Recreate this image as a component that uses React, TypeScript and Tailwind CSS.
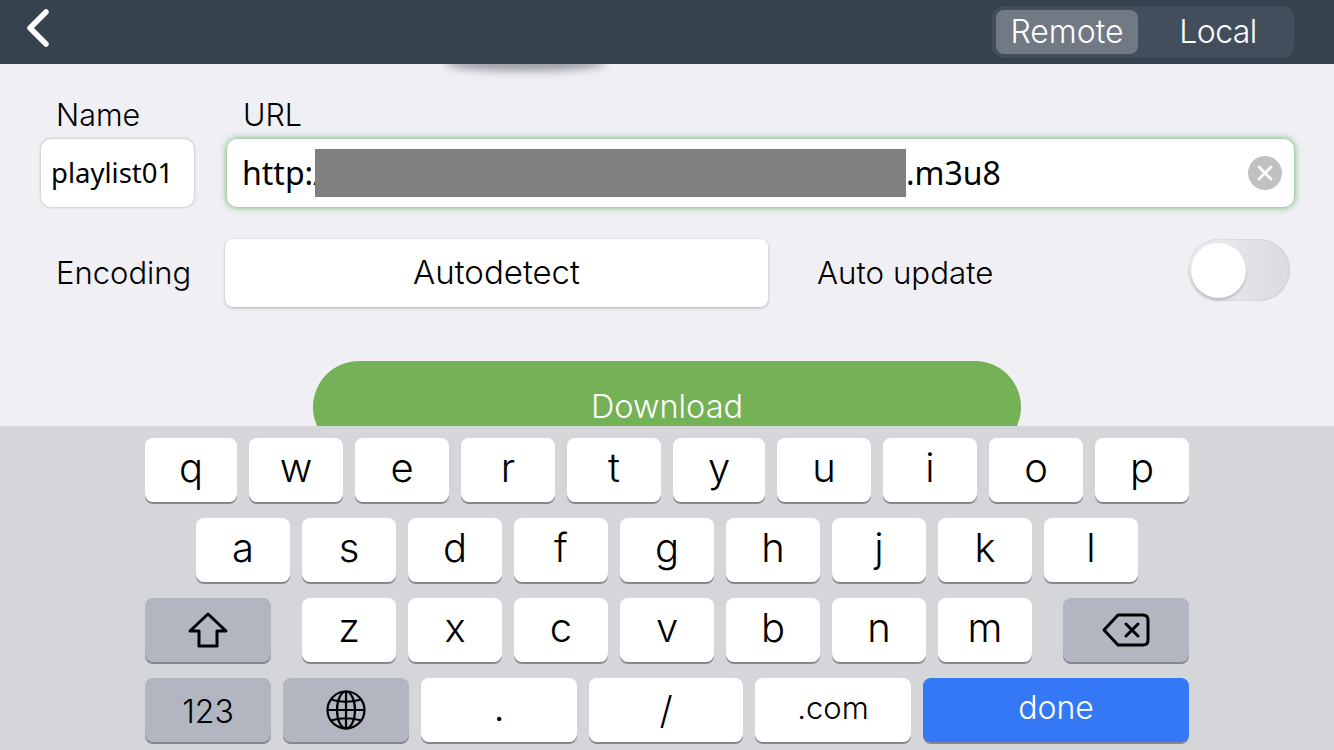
import { ReactNode } from "react";

const sans = "font-['Inter','Liberation_Sans',sans-serif]";

const Key = ({
  children,
  className = "w-[94px] bg-white text-[40px]",
}: {
  children: ReactNode;
  className?: string;
}) => (
  <div
    className={`flex h-[64px] shrink-0 items-center justify-center rounded-[8px] text-black shadow-[0_2px_0_#85888f] ${className}`}
  >
    {children}
  </div>
);

const Letter = ({ ch, w }: { ch: string; w?: string }) => (
  <Key className={`${w ?? "w-[94px]"} bg-white font-light text-[40px]`}>
    <span className="-mt-[4px] leading-none">{ch}</span>
  </Key>
);

const grayKey = "w-[126px] bg-[#b1b6c1]";

function ShiftIcon() {
  return (
    <svg width="42" height="38" viewBox="0 0 42 38" fill="none" stroke="black" strokeWidth="3" strokeLinejoin="round">
      <path d="M21 3 L39 20 L30 20 L30 35 L12 35 L12 20 L3 20 Z" />
    </svg>
  );
}

function DeleteIcon() {
  return (
    <svg width="48" height="34" viewBox="0 0 48 34" fill="none" stroke="black" strokeWidth="3" strokeLinecap="round" strokeLinejoin="round">
      <path d="M16 2 H41 Q46 2 46 7 V27 Q46 32 41 32 H16 L2 17 Z" />
      <path d="M24 11 L36 23 M36 11 L24 23" />
    </svg>
  );
}

function GlobeIcon() {
  return (
    <svg width="42" height="42" viewBox="0 0 42 42" fill="none" stroke="black" strokeWidth="2.2">
      <circle cx="21" cy="21" r="18.5" />
      <ellipse cx="21" cy="21" rx="9" ry="18.5" />
      <path d="M21 2.5 V39.5 M2.5 21 H39.5 M6 10.5 Q21 15 36 10.5 M6 31.5 Q21 27 36 31.5" />
    </svg>
  );
}

export default function App() {
  return (
    <div className={`flex h-[750px] w-[1334px] flex-col overflow-hidden bg-[#efeff4] ${sans}`}>
      {/* nav bar */}
      <header className="relative z-10 flex h-[64px] shrink-0 items-center justify-between bg-[#36434f] pr-[40px] pl-[24px]">
        <svg width="28" height="40" viewBox="0 0 28 40" fill="none" stroke="white" strokeWidth="5.5" strokeLinecap="round" strokeLinejoin="round" className="-mt-[8px]">
          <path d="M22 4 L6 20 L22 36" />
        </svg>
        <div className="flex h-[52px] w-[302px] items-center rounded-[12px] bg-[#424e5b] p-[4px] text-[32px] text-white">
          <div className="flex h-[44px] w-[142px] items-center justify-center rounded-[8px] bg-[#717985] font-light">
            Remote
          </div>
          <div className="flex h-[44px] flex-1 items-center justify-center pl-[8px] font-light tracking-[-0.6px]">Local</div>
        </div>
      </header>

      {/* form */}
      <main className="relative h-[362px] shrink-0 overflow-hidden text-black">
        <div className="absolute top-[-8px] left-[445px] h-[15px] w-[160px] rounded-[50%] bg-[#9b9da4] blur-[4px]" />

        <div className="flex h-[75px] items-end pb-[9px] pl-[56px] text-[30.5px] leading-none font-light">
          <span className="w-[187px]">Name</span>
          <span>URL</span>
        </div>

        <div className="flex pl-[41px]">
          <div className="flex h-[68px] w-[153px] items-center rounded-[10px] bg-white pl-[10px] font-['Noto_Sans',sans-serif] text-[27.5px] shadow-[0_0_3px_#a9a9ad]">
            playlist01
          </div>
          <div className="relative ml-[33px] flex h-[68px] w-[1067px] items-center rounded-[10px] bg-white pl-[15px] font-['Noto_Sans',sans-serif] text-[32px] shadow-[0_0_7px_#5aa85a]">
            <span className="w-[73px] shrink-0">http:/</span>
            <div className="h-[48px] w-[591px] shrink-0 bg-[#808080]" />
            <span>.m3u8</span>
            <div className="absolute top-[17px] right-[12px] flex h-[34px] w-[34px] items-center justify-center rounded-full bg-[#c1c1c3]">
              <svg width="16" height="16" viewBox="0 0 16 16" stroke="white" strokeWidth="2.6" strokeLinecap="round">
                <path d="M2 2 L14 14 M14 2 L2 14" />
              </svg>
            </div>
          </div>
        </div>

        <div className="mt-[32px] flex items-start pl-[56px] text-[31px] font-light">
          <span className="flex h-[68px] w-[169px] items-center">Encoding</span>
          <div className="flex h-[68px] w-[543px] items-center justify-center rounded-[8px] bg-white text-[33px] shadow-[0_1px_3px_#b0b0b4]">
            Autodetect
          </div>
          <span className="ml-[49px] flex h-[68px] w-[371px] items-center text-[31.3px]">Auto update</span>
          <div className="flex h-[62px] w-[102px] items-center rounded-full bg-gradient-to-r from-[#f0f0f3] to-[#dadadf] pl-[3px] shadow-[inset_0_0_2px_#bdbdc2]">
            <div className="h-[55px] w-[55px] rounded-full bg-white shadow-[0_2px_3px_#b5b5b8]" />
          </div>
        </div>

        <div className="mx-auto mt-[54px] flex h-[92px] w-[708px] items-center justify-center rounded-[46px] bg-[#75b156] text-[32.5px] font-light text-white">
          Download
        </div>
      </main>

      {/* keyboard */}
      <section className="flex flex-1 flex-col gap-[16px] bg-[#d4d6da] pt-[12px] pl-[145px]">
        <div className="flex gap-[12px]">
          <Letter ch="q" w="w-[92px]" />
          {["w", "e", "r", "t"].map((c) => (
            <Letter key={c} ch={c} />
          ))}
          <Letter ch="y" w="w-[92px]" />
          {["u", "i", "o", "p"].map((c) => (
            <Letter key={c} ch={c} />
          ))}
        </div>
        <div className="flex gap-[12px] pl-[51px]">
          {["a", "s", "d", "f", "g", "h", "j", "k", "l"].map((c) => (
            <Letter key={c} ch={c} />
          ))}
        </div>
        <div className="flex gap-[12px]">
          <Key className={`${grayKey} mr-[19px]`}>
            <ShiftIcon />
          </Key>
          {["z", "x", "c", "v", "b", "n", "m"].map((c) => (
            <Letter key={c} ch={c} />
          ))}
          <Key className={`${grayKey} ml-[19px]`}>
            <DeleteIcon />
          </Key>
        </div>
        <div className="flex gap-[12px]">
          <Key className={`${grayKey} pt-[4px] text-[32px] font-light`}>123</Key>
          <Key className={grayKey}>
            <GlobeIcon />
          </Key>
          <Key className="w-[156px] bg-white text-[32px]">.</Key>
          <Key className="w-[154px] bg-white text-[38px] font-light">/</Key>
          <Key className="w-[156px] bg-white pb-[4px] text-[31px] font-light">.com</Key>
          <Key className="w-[266px] bg-[#3478f6] pb-[4px] text-[32px] font-light !text-white">done</Key>
        </div>
      </section>
    </div>
  );
}
